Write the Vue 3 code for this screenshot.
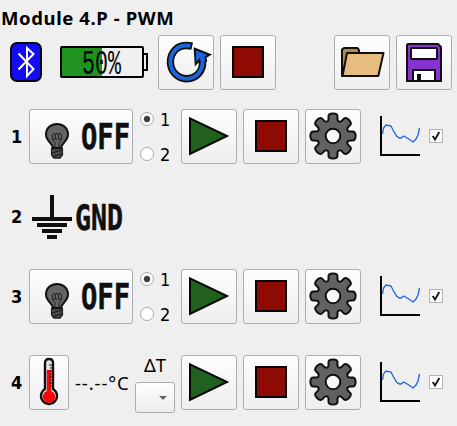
<script setup>
import { reactive } from 'vue'

const channels = reactive([
  { id: 1, kind: 'pwm', mode: '1', plot: true },
  { id: 2, kind: 'ground' },
  { id: 3, kind: 'pwm', mode: '1', plot: true },
  { id: 4, kind: 'temp', plot: true },
])

function gearOutline() {
  const pts = []
  for (let i = 0; i < 8; i++) {
    const a = (i * Math.PI) / 4
    for (const [x, y] of [[-4, -15.2], [-5, -22.6], [5, -22.6], [4, -15.2]]) {
      pts.push([28 + x * Math.cos(a) - y * Math.sin(a), 27 + x * Math.sin(a) + y * Math.cos(a)])
    }
  }
  const mid = (p, q) => `${((p[0] + q[0]) / 2).toFixed(2)} ${((p[1] + q[1]) / 2).toFixed(2)}`
  let d = `M${mid(pts[31], pts[0])}`
  pts.forEach((p, i) => {
    d += `Q${p[0].toFixed(2)} ${p[1].toFixed(2)} ${mid(p, pts[(i + 1) % 32])}`
  })
  return d + 'Z'
}
const gear = gearOutline()
</script>

<template>
  <main class="panel">
    <h1 class="title">Module 4.P - PWM</h1>

    <div class="toolbar">
      <svg class="bluetooth" width="32" height="40" viewBox="0 0 32 40">
        <rect x="1" y="1" width="30" height="38" rx="6" fill="#140cf4" stroke="#080808" stroke-width="2" />
        <path d="M8.5 11.5L23.5 27L17 34V6L23.5 12L8.5 27.5" fill="none" stroke="#fff" stroke-width="2" />
      </svg>
      <svg class="battery" width="88" height="32" viewBox="0 0 88 32">
        <rect x="1" y="1" width="82" height="30" rx="1" fill="#efefef" stroke="#000" stroke-width="2" />
        <rect x="2" y="2" width="40" height="28" fill="#20921f" />
        <path d="M84 8H87V24H84" fill="none" stroke="#000" stroke-width="2" />
        <text class="charge" transform="translate(22 28) scale(1 1.85)" textLength="39" lengthAdjust="spacingAndGlyphs">50%</text>
      </svg>
      <button class="btn">
        <svg width="56" height="55" viewBox="-0.7 0 56 55">
          <path d="M33.5 11.2C18 8 11.5 18 11.7 28C12.5 37 19 43.5 28 43.8C38 43.5 44.5 36 44 26" fill="none" stroke="#101010" stroke-width="7.4" />
          <path d="M36 13.8L51 19.7L46.8 22L47.3 26L41 28L40.7 25L37 29Z" fill="#1c64dc" stroke="#101010" stroke-width="2" />
          <path d="M31.8 10.9C18 8.5 11.5 18 11.7 28C12.5 37 19 43.5 28 43.8C38 43.5 44.5 36 44 24" fill="none" stroke="#1c64dc" stroke-width="3.8" />
          <path d="M37.5 16L47.5 19.8L45 22L44 27L41 23L38 25.5Z" fill="#1c64dc" />
        </svg>
      </button>
      <button class="btn">
        <svg width="56" height="55"><rect x="13" y="12" width="30" height="30" fill="#8d0b02" stroke="#050505" stroke-width="2" /></svg>
      </button>
      <button class="btn folder">
        <svg width="56" height="55" viewBox="0 0 56 55" stroke="#101010" stroke-width="2" stroke-linejoin="round">
          <path d="M8 41V14.5L10 13H23.5L25 15V19H14L8 41Z" fill="#b58a4b" />
          <path d="M13 18H49.5L44.3 41H8.5Z" fill="#e7bd7f" />
        </svg>
      </button>
      <button class="btn">
        <svg width="56" height="55" viewBox="0 0 56 55" stroke="#101010" stroke-width="2">
          <path d="M12 9H42L45 12V46H11V10Z" fill="#8633cf" />
          <rect x="15" y="13" width="26" height="11" rx="1" fill="#fff" />
          <path d="M17 46V35H39V46Z" fill="#fff" />
          <rect x="21" y="39" width="4" height="7" fill="#101010" stroke="none" />
        </svg>
      </button>
    </div>

    <section v-for="ch in channels" :key="ch.id" class="channel" :class="ch.kind">
      <span class="number">{{ ch.id }}</span>

      <div v-if="ch.kind === 'pwm'" class="lead">
        <button class="btn output">
          <svg width="104" height="55" viewBox="0 0 104 55">
            <path d="M22.5 39H33.5V46L31 49.2H25L22.5 46Z" fill="#484848" stroke="#202020" stroke-width="1.2" />
            <path d="M23 44L33 41M23 48L33 45" stroke="#151515" />
            <path d="M24 39C24 35 17 32 17 25.5C17 19 22 15 28 15S39 19 39 25.5C39 32 32 35 32 39Z" fill="#646464" stroke="#101010" stroke-width="2" />
            <path d="M26 38V34L23.5 30V26L25 24L26.5 26V30M30 38V34L32.5 30V26L31 24L29.5 26V30M26.5 26L28 24L29.5 26M23.5 30H32.5" fill="none" stroke="#242424" />
            <text class="lcd" transform="translate(52 39.7) scale(1 1.3)" textLength="49" lengthAdjust="spacingAndGlyphs">OFF</text>
          </svg>
        </button>
        <div class="modes">
          <label v-for="m in ['1', '2']" :key="m">
            <input v-model="ch.mode" type="radio" :name="'mode' + ch.id" :value="m" /><span>{{ m }}</span>
          </label>
        </div>
      </div>

      <svg v-else-if="ch.kind === 'ground'" width="96" height="44" viewBox="0 0 96 44">
        <path d="M21 0h4v22h18v4H3v-4h18zM8 28h30v4H8zM13 34h20v4H13zM18 40h10v4H18z" fill="#101010" />
        <text class="lcd" transform="translate(46 34.7) scale(1 1.3)" textLength="48" lengthAdjust="spacingAndGlyphs">GND</text>
      </svg>

      <div v-else class="lead">
        <button class="btn sensor">
          <svg width="40" height="55" viewBox="0 0 40 55">
            <path d="M16 34V8Q16 4 20 4T24 8V34A8 8 0 1 1 16 34Z" fill="#e4e4e4" stroke="#101010" stroke-width="2.4" />
            <path d="M17.8 15H22.2V36A6.2 6.2 0 1 1 17.8 36Z" fill="#fa0505" />
            <path d="M20 10h3M21 13h2M20 16h3M21 19h2M20 22h3M21 25h2M20 28h3M21 31h2" stroke="#101010" />
          </svg>
        </button>
        <span class="reading">--.--°C</span>
        <div class="delta">
          <span>ΔT</span>
          <button class="btn combo">
            <svg width="8" height="4"><path d="M0 0H8L4 4Z" fill="#666" /></svg>
          </button>
        </div>
      </div>

      <template v-if="ch.kind !== 'ground'">
        <div class="actions">
          <button class="btn">
            <svg width="56" height="55"><path d="M9 9.3L46 27L9 44.8Z" fill="#20611d" stroke="#050505" stroke-width="2" /></svg>
          </button>
          <button class="btn">
            <svg width="56" height="55"><rect x="13" y="12" width="30" height="30" fill="#8d0b02" stroke="#050505" stroke-width="2" /></svg>
          </button>
          <button class="btn">
            <svg width="56" height="55" stroke="#101010" stroke-width="2">
              <path :d="gear" fill="#616161" />
              <circle cx="28" cy="27" r="7.3" fill="#fafafa" />
            </svg>
          </button>
        </div>
        <svg class="plot" width="40" height="40" viewBox="0 0 40 40">
          <path d="M1 0V39H40" fill="none" stroke="#000" stroke-width="2" />
          <path d="M2.5 18L3.5 12L6 9L11 10L13 14L16.5 20L19.5 22H21L23.5 20L28 22.5L33 26L36 23L38 19L39.5 12" fill="none" stroke="#1c64dc" stroke-width="1.3" />
        </svg>
        <label class="check">
          <input v-model="ch.plot" type="checkbox" />
          <svg v-if="ch.plot" width="14" height="14"><path d="M3.7 7L6 10.5L10.3 3" fill="none" stroke="#111" stroke-width="1.8" /></svg>
        </label>
      </template>
    </section>
  </main>
</template>

<style>
body {
  background: #efefef;
}
</style>

<style scoped>
.panel {
  width: 457px;
  height: 426px;
  overflow: hidden;
  background: #efefef;
  color: #000;
  font: 17px/20px "DejaVu Sans Condensed", "DejaVu Sans", sans-serif;
  font-stretch: condensed;
}
svg {
  display: block;
  flex: none;
  overflow: visible;
}
.title {
  margin: 0;
  height: 35px;
  box-sizing: border-box;
  padding: 8px 0 0 1px;
  font-family: "Noto Sans", sans-serif;
  font-size: 18.5px;
  font-weight: bold;
  font-stretch: normal;
  line-height: 20px;
  letter-spacing: 0.6px;
  white-space: nowrap;
}
.btn {
  display: flex;
  flex: none;
  align-items: center;
  justify-content: center;
  box-sizing: border-box;
  width: 56px;
  height: 55px;
  padding: 0;
  border: 1px solid #adadad;
  border-radius: 3px;
  background: linear-gradient(#fefefe, #eeeeee);
}
.toolbar {
  display: flex;
  align-items: center;
  gap: 6px;
  height: 55px;
  margin-bottom: 19px;
  padding-left: 10px;
}
.bluetooth {
  margin: 0 12px 1px 0;
}
.battery {
  margin: 0 4px 1px 0;
}
.folder {
  margin-left: 52px;
}
.charge {
  font: 19px "Liberation Mono", monospace;
  fill: #050505;
}
.lcd {
  font: bold 27px "DejaVu Sans Mono", monospace;
  fill: #101010;
  stroke: #101010;
  stroke-width: 0.4px;
}
.channel {
  display: grid;
  grid-template-columns: 29px 152px 199px 49px 14px;
  align-items: center;
  height: 55px;
}
.channel.ground {
  height: 105px;
}
.channel.temp {
  margin-top: 31px;
}
.number {
  padding-left: 11px;
  font-size: 18px;
  font-weight: bold;
}
.lead {
  display: flex;
  align-items: center;
  height: 55px;
}
.output {
  width: 104px;
}
.modes {
  display: flex;
  flex-direction: column;
  gap: 15px;
  margin-left: 7px;
}
.modes label {
  display: flex;
  align-items: center;
  gap: 6px;
}
.modes span {
  padding-top: 2px;
  font-size: 18px;
  line-height: 18px;
}
.modes input {
  appearance: none;
  box-sizing: border-box;
  width: 14px;
  height: 14px;
  margin: 0;
  border: 1px solid #a9a9a9;
  border-radius: 50%;
  background: #fff;
}
.modes input:checked {
  background: radial-gradient(circle, #3c3c3c 2.8px, #fff 3.6px);
}
.sensor {
  width: 40px;
}
.reading {
  width: 60px;
  margin-left: 6px;
  font-family: "Noto Sans", sans-serif;
  font-size: 18.5px;
  font-stretch: normal;
  letter-spacing: 0.9px;
  white-space: nowrap;
}
.delta {
  display: flex;
  flex-direction: column;
  align-items: center;
  gap: 7px;
  height: 58px;
  margin-top: 3px;
  font-family: "Noto Sans", sans-serif;
  font-size: 18.5px;
  font-stretch: normal;
}
.combo {
  width: 40px;
  height: 31px;
  padding-left: 16px;
}
.actions {
  display: flex;
  gap: 6px;
}
.plot {
  margin-bottom: 1px;
}
.check {
  display: grid;
  margin-bottom: 1px;
}
.check > * {
  grid-area: 1 / 1;
}
.check input {
  appearance: none;
  box-sizing: border-box;
  width: 14px;
  height: 14px;
  margin: 0;
  border: 1px solid #b4b4b4;
  background: #fff;
}
</style>
